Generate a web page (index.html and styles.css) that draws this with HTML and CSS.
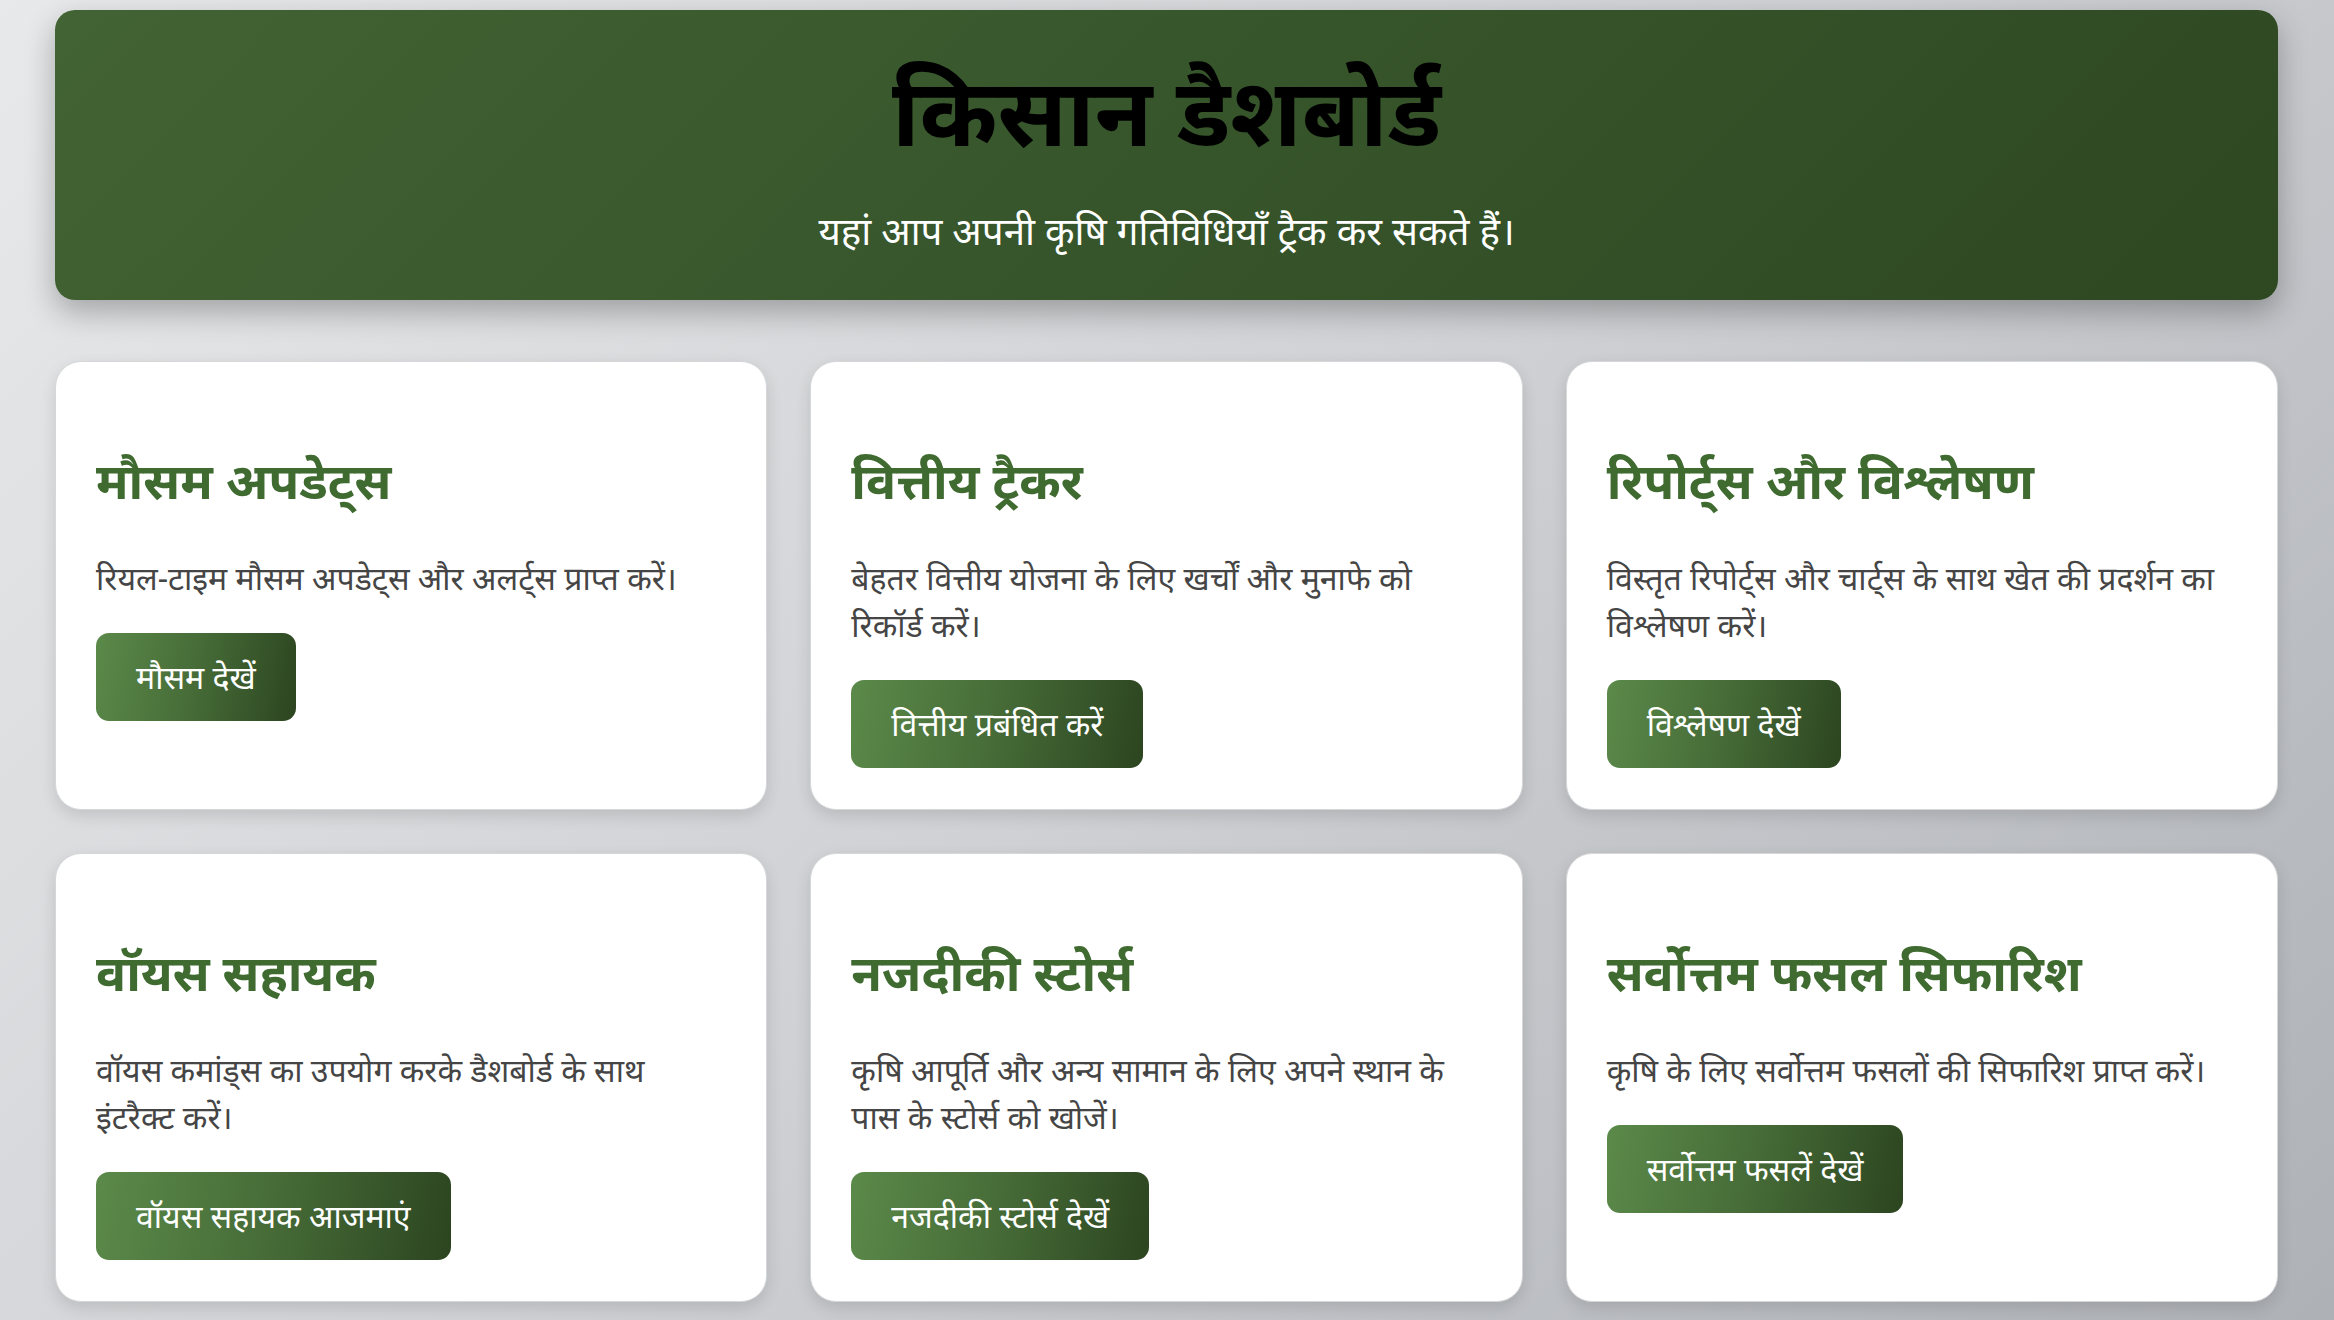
FILE: index.html
```html
<!DOCTYPE html>
<html lang="hi">
<head>
<meta charset="utf-8">
<title>किसान डैशबोर्ड</title>
<link rel="stylesheet" href="styles.css">
</head>
<body>
<div class="page">
  <header class="hero">
    <h1 class="hero-title">किसान डैशबोर्ड</h1>
    <p class="hero-sub">यहां आप अपनी कृषि गतिविधियाँ ट्रैक कर सकते हैं।</p>
  </header>
  <main class="grid">
    <section class="card">
      <h2 class="card-title">मौसम अपडेट्स</h2>
      <p class="card-text">रियल-टाइम मौसम अपडेट्स और अलर्ट्स प्राप्त करें।</p>
      <div><a class="btn">मौसम देखें</a></div>
    </section>
    <section class="card">
      <h2 class="card-title">वित्तीय ट्रैकर</h2>
      <p class="card-text">बेहतर वित्तीय योजना के लिए खर्चों और मुनाफे को रिकॉर्ड करें।</p>
      <div><a class="btn">वित्तीय प्रबंधित करें</a></div>
    </section>
    <section class="card">
      <h2 class="card-title">रिपोर्ट्स और विश्लेषण</h2>
      <p class="card-text">विस्तृत रिपोर्ट्स और चार्ट्स के साथ खेत की प्रदर्शन का विश्लेषण करें।</p>
      <div><a class="btn">विश्लेषण देखें</a></div>
    </section>
    <section class="card">
      <h2 class="card-title">वॉयस सहायक</h2>
      <p class="card-text">वॉयस कमांड्स का उपयोग करके डैशबोर्ड के साथ इंटरैक्ट करें।</p>
      <div><a class="btn">वॉयस सहायक आजमाएं</a></div>
    </section>
    <section class="card">
      <h2 class="card-title">नजदीकी स्टोर्स</h2>
      <p class="card-text">कृषि आपूर्ति और अन्य सामान के लिए अपने स्थान के पास के स्टोर्स को खोजें।</p>
      <div><a class="btn">नजदीकी स्टोर्स देखें</a></div>
    </section>
    <section class="card">
      <h2 class="card-title">सर्वोत्तम फसल सिफारिश</h2>
      <p class="card-text">कृषि के लिए सर्वोत्तम फसलों की सिफारिश प्राप्त करें।</p>
      <div><a class="btn">सर्वोत्तम फसलें देखें</a></div>
    </section>
  </main>
</div>
</body>
</html>
```

FILE: styles.css
```css
html, body {
  margin: 0;
  height: 100%;
}
body {
  font-family: "Noto Sans", "Noto Sans Devanagari", sans-serif;
  background: linear-gradient(135deg, #e8e9eb 0%, #cfd1d4 50%, #aeb1b6 100%);
  background-attachment: fixed;
  color: #444;
}
.page {
  padding: 10px 56px 40px 55px;
}
.hero {
  box-sizing: border-box;
  height: 290px;
  padding-top: 44px;
  border-radius: 20px;
  background: linear-gradient(135deg, #426333 0%, #37552b 50%, #2e4822 100%);
  box-shadow: 0 12px 30px rgba(0, 0, 0, 0.28);
  text-align: center;
}
.hero-title {
  margin: 0;
  font-size: 94px;
  font-weight: 700;
  color: #000;
  line-height: 113px;
}
.hero-sub {
  margin: 36px 0 0;
  font-size: 38.5px;
  color: #fff;
  line-height: 54px;
}
.grid {
  margin-top: 61px;
  display: grid;
  grid-template-columns: repeat(3, 1fr);
  gap: 43px;
}
.card {
  background: #fff;
  border: 1px solid #d6d7d9;
  border-radius: 26px;
  box-shadow: 0 6px 16px rgba(0, 0, 0, 0.12);
  padding: 40px 40px 41px 40px;
}
.card-title {
  margin: 41px 0 36px;
  font-size: 50px;
  font-weight: 700;
  line-height: 75px;
  color: #3f6a30;
}
.card-text {
  margin: 0 0 32px;
  font-size: 32px;
  line-height: 47px;
  color: #454545;
}
.btn {
  display: inline-block;
  padding: 22px 40px;
  font-size: 32px;
  line-height: 44px;
  color: #fff;
  border-radius: 13px;
  background: linear-gradient(100deg, #5b8a4a 0%, #466b37 50%, #2c4520 100%);
}
```
